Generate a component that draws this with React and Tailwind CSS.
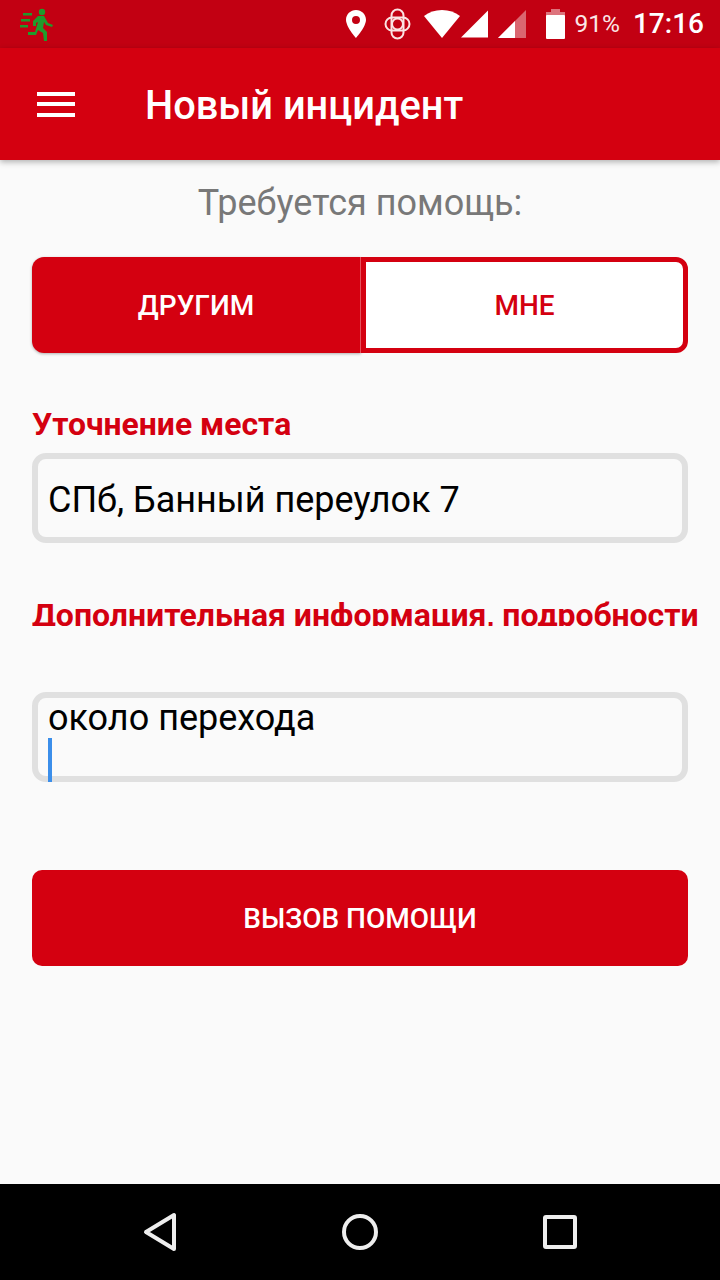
import React from 'react';

const StatusBar = () => (
  <div className="h-12 bg-[#c20012] flex items-center pl-[20px] pr-[16px]">
    <svg width="34" height="34" viewBox="0 0 34 34" className="text-[#1f9b2c]" fill="currentColor">
      <circle cx="22" cy="5" r="3.200" />
      <path d="M18 9h6l4 7 5 2-1 2-6-2-2-3-1 6 4 4 0 9h-3l-1-8-5-3-2 5H8v-3h7l3-10-2 1v3h-3v-5z" />
      <rect x="3" y="6" width="9" height="2.500" />
      <rect x="1" y="12" width="9" height="2.500" />
      <rect x="0" y="18" width="8" height="2.500" />
    </svg>
    <div className="flex-1" />
    <svg width="20" height="28" viewBox="0 0 20 28" fill="#fff" className="mr-[18px]">
      <path fillRule="evenodd" d="M10 0C4.500 0 0 4.400 0 9.800 0 17 10 28 10 28s10-11 10-18.200C20 4.400 15.500 0 10 0zm0 6a4 4 0 1 1 0 8 4 4 0 0 1 0-8z" />
    </svg>
    <svg width="27" height="32" viewBox="0 0 27 32" fill="none" stroke="#fbe3e3" strokeWidth="2" className="mr-[13px]">
      <rect x="7.500" y="1.500" width="12" height="29" rx="6" />
      <rect x="1.500" y="9.500" width="24" height="13" rx="6.500" />
      <circle cx="13.500" cy="16" r="5.500" />
    </svg>
    <svg width="36" height="28" viewBox="0 0 36 28" fill="#fff" className="mr-[1px]">
      <path d="M0 6C5 2 11 0 18 0s13 2 18 6L18 28z" />
    </svg>
    <svg width="27" height="28" viewBox="0 0 28 28" fill="#fff" className="mr-[10px]">
      <path d="M28 0v28H0z" />
    </svg>
    <svg width="28" height="28" viewBox="0 0 28 28" className="mr-[20px]">
      <path d="M28 0v28H0z" fill="#fff" fillOpacity="0.4" />
      <path d="M17 11v17H0z" fill="#fff" />
    </svg>
    <svg width="19" height="30" viewBox="0 0 19 30" className="mr-[9px]">
      <path d="M5 0h9v3h5v5H0V3h5z" fill="#fff" fillOpacity="0.45" />
      <rect y="6" width="19" height="24" rx="1" fill="#fff" />
    </svg>
    <span className="text-[24.500px] text-[#fbe6e6] mr-[13px] font-['Roboto',sans-serif]">91%</span>
    <span className="text-[28px] font-medium text-[#fff] font-['Roboto',sans-serif]">17:16</span>
  </div>
);

const NavBar = () => (
  <div className="h-24 bg-black flex items-center pl-[141px]">
    <svg width="40" height="42" viewBox="0 0 40 42" fill="none" stroke="#eee" strokeWidth="4" strokeLinejoin="round">
      <path d="M33 4v34L5 21z" />
    </svg>
    <svg width="40" height="40" viewBox="0 0 40 40" fill="none" stroke="#eee" strokeWidth="4" className="ml-[159px]">
      <circle cx="20" cy="20" r="16" />
    </svg>
    <svg width="36" height="36" viewBox="0 0 36 36" fill="none" stroke="#eee" strokeWidth="4" strokeLinejoin="round" className="ml-[162px]">
      <rect x="3" y="3" width="30" height="30" rx="1" />
    </svg>
  </div>
);

export default function App() {
  return (
    <div className="w-[720px] h-[1280px] bg-[#fafafa] flex flex-col font-['Roboto',sans-serif] overflow-hidden">
      <StatusBar />
      <header className="h-[112px] bg-[#d40010] flex items-center pl-[37px] shadow-[0_2px_6px_rgba(0,0,0,0.3)] z-10">
        <div className="w-[38px] flex flex-col gap-[6.500px]">
          <div className="h-[4px] bg-white" />
          <div className="h-[4px] bg-white" />
          <div className="h-[4px] bg-white" />
        </div>
        <h1 className="ml-[70px] mt-[3px] text-[39.750px] font-medium text-white leading-none">Новый инцидент</h1>
      </header>

      <main className="flex-1 px-[32px] flex flex-col">
        <p className="mt-[19px] h-[48px] text-center text-[36px] leading-[48px] text-[#787878]">Требуется помощь:</p>
        <div className="mt-[30px] h-[96px] flex">
          <button className="w-[329px] pt-[2px] bg-[#d40010] rounded-l-[12px] border-r border-[#e8505c] shadow-[0_1px_3px_rgba(0,0,0,0.3)] text-white text-[28px] font-medium">ДРУГИМ</button>
          <button className="flex-1 pt-[1px] bg-white border-[5px] border-[#d40010] rounded-r-[12px] text-[#d40010] text-[28px] font-medium">МНЕ</button>
        </div>

        <label className="mt-[51px] h-[40px] text-[31.900px] leading-[40px] font-bold text-[#d40010]">Уточнение места</label>
        <div className="mt-[9px] h-[90px] border-[6px] border-[#e0e0e0] rounded-[14px] flex items-center pl-[10px] pt-[3px] text-[36px] text-black">
          СПб, Банный переулок 7
        </div>

        <label className="mt-[52px] -mr-[32px] h-[31px] overflow-hidden whitespace-nowrap text-[32px] leading-[40px] font-bold text-[#d40010]">Дополнительная информация, подробности</label>
        <div className="mt-[66px] h-[90px] border-[6px] border-[#e0e0e0] rounded-[14px] pl-[10px] text-[36px] leading-[40px] text-black">
          <div>около перехода</div>
          <div className="w-[4px] h-[44px] bg-[#3b8eea]" />
        </div>

        <button className="mt-[88px] h-[96px] pt-[2px] bg-[#d40010] rounded-[10px] text-white text-[28px] font-medium">ВЫЗОВ ПОМОЩИ</button>
      </main>

      <NavBar />
    </div>
  );
}
